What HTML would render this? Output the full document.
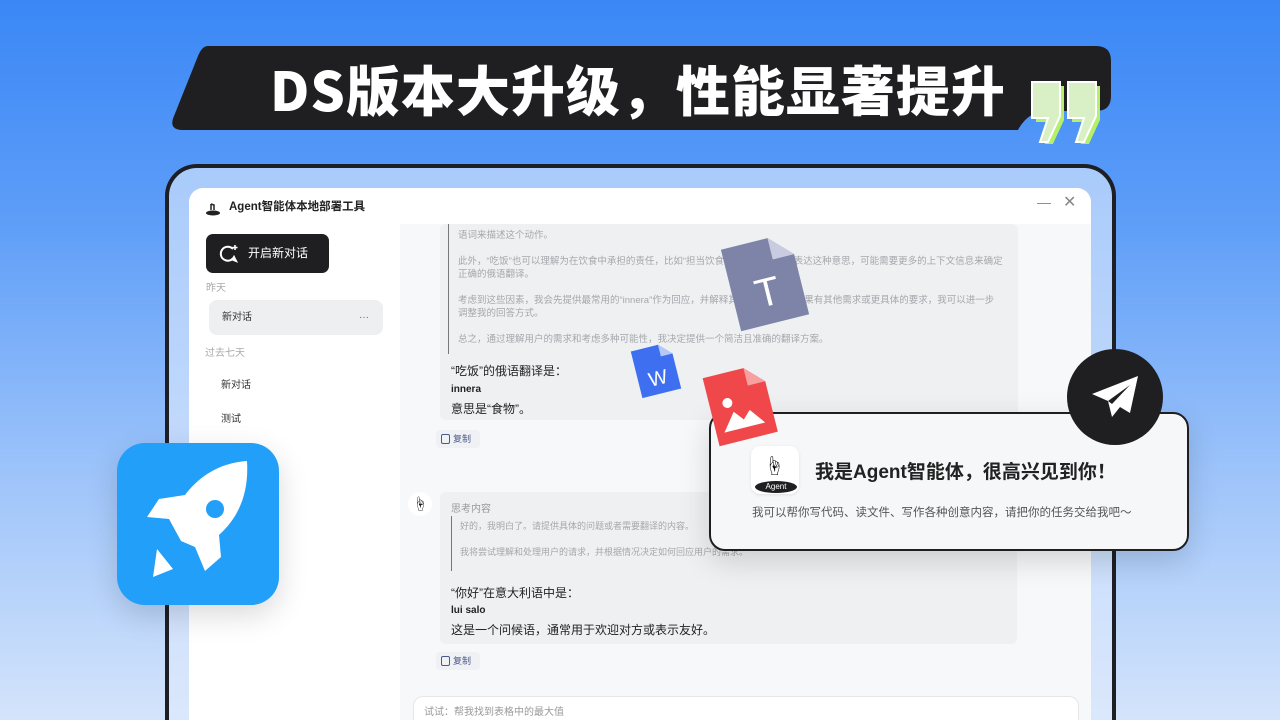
<!DOCTYPE html>
<html><head><meta charset="utf-8">
<style>
*{margin:0;padding:0;box-sizing:border-box}
html,body{width:1280px;height:720px;overflow:hidden}
body{position:relative;font-family:"Liberation Sans","Noto Sans CJK SC",sans-serif;background:linear-gradient(180deg,#3a87f6 0%,#5d9df8 30%,#9cc3fa 65%,#d4e4fb 100%)}
.abs{position:absolute}
.frame{left:165px;top:164px;width:951px;height:562px;border:4px solid #1d1f24;border-bottom:none;border-radius:32px 32px 0 0;background:linear-gradient(180deg,#a9cbfb,#dbe8fc)}
.win{left:189px;top:188px;width:902px;height:532px;background:#fff;border-radius:14px 14px 0 0;overflow:hidden}
.chat{left:211px;top:36px;width:691px;height:496px;background:#f7f8fa}
.think{background:#eff0f2;border-radius:6px}
.g{color:#a5a7ac;font-size:9.5px;line-height:13px}
.t{color:#222;font-size:12px}
</style></head><body>
<svg class="abs" style="left:168px;top:46px" width="945" height="86"><path d="M40 0 H928 Q943 0 943 15 V50 Q943 65 928 65 H880 Q860 65 850 84 H15 Q0 84 6 70 L30 10 Q34 0 40 0Z" fill="#1f1f21"/></svg>
<div class="abs" style="left:270px;top:52px;font-size:54px;font-weight:900;color:#fff;letter-spacing:1px;line-height:72px;font-family:'Noto Sans CJK SC',sans-serif;white-space:nowrap">DS版本大升级，性能显著提升</div>
<svg class="abs" style="left:1028px;top:78px" width="80" height="66">
<g fill="#b6f06a"><path d="M4 4h28v34l-12 26h-8l8-24h-16z" transform="translate(4,4)"/><path d="M40 4h28v34l-12 26h-8l8-24h-16z" transform="translate(4,4)"/></g>
<g fill="#d9f0c7" stroke="#fff" stroke-width="2"><path d="M4 4h28v34l-12 26h-8l8-24h-16z"/><path d="M40 4h28v34l-12 26h-8l8-24h-16z"/></g></svg>
<div class="abs frame"></div>
<div class="abs win">
 <div class="abs" style="left:16px;top:10px;width:16px;height:18px"><svg width="16" height="18"><ellipse cx="8" cy="15" rx="7" ry="2.5" fill="#222"/><path d="M6 12V6M6 6l3 1v5" stroke="#222" stroke-width="1.5" fill="none"/></svg></div>
 <div class="abs" style="left:40px;top:10px;font-size:11.5px;font-weight:bold;color:#222">Agent智能体本地部署工具</div>
 <div class="abs" style="left:848px;top:6px;font-size:14px;color:#888">—</div>
 <div class="abs" style="left:874px;top:4px;font-size:16px;color:#888">✕</div>
 <div class="abs" style="left:17px;top:46px;width:123px;height:39px;background:#1f1f21;border-radius:7px;color:#fff;font-size:12px;line-height:39px;padding-left:42px">开启新对话</div>
 <svg class="abs" style="left:30px;top:56px" width="20" height="20"><path d="M14 5A7 7 0 1 0 15 13L17 17 12 15" fill="none" stroke="#fff" stroke-width="2"/><path d="M16 1v5M13.5 3.5h5" stroke="#fff" stroke-width="1.6"/></svg>
 <div class="abs" style="left:17px;top:91px;font-size:10px;color:#aaa">昨天</div>
 <div class="abs" style="left:20px;top:112px;width:174px;height:35px;background:#eeeff1;border-radius:8px;font-size:10px;color:#333;line-height:35px;padding-left:13px">新对话<span style="position:absolute;right:14px;color:#666">···</span></div>
 <div class="abs" style="left:16px;top:156px;font-size:10px;color:#aaa">过去七天</div>
 <div class="abs" style="left:32px;top:188px;font-size:10px;color:#333">新对话</div>
 <div class="abs" style="left:32px;top:222px;font-size:10px;color:#333">测试</div>
 <div class="abs chat">
  <div class="abs think" style="left:40px;top:0;width:578px;height:196px"></div>
  <div class="abs" style="left:48px;top:0;width:1px;height:130px;background:#777"></div>
  <div class="abs g" style="left:58px;top:5px;width:545px">语词来描述这个动作。<br><br>此外，“吃饭”也可以理解为在饮食中承担的责任，比如“担当饮食”。如果用户想要表达这种意思，可能需要更多的上下文信息来确定正确的俄语翻译。<br><br>考虑到这些因素，我会先提供最常用的“innera”作为回应，并解释其含义和背景。如果有其他需求或更具体的要求，我可以进一步调整我的回答方式。<br><br>总之，通过理解用户的需求和考虑多种可能性，我决定提供一个简洁且准确的翻译方案。</div>
  <div class="abs t" style="left:51px;top:138px">“吃饭”的俄语翻译是：</div>
  <div class="abs" style="left:51px;top:160px;font-size:10px;font-weight:bold;color:#222">innera</div>
  <div class="abs t" style="left:51px;top:176px">意思是“食物”。</div>
  <div class="abs" style="left:36px;top:206px;width:44px;height:18px;background:#eff1f5;border-radius:4px;font-size:9px;color:#4a5a8a;line-height:18px;padding-left:17px">复制</div>
  <div class="abs" style="left:41px;top:210px;width:9px;height:10px;border:1.2px solid #4a5a8a;border-radius:2px"></div>
  <div class="abs" style="left:8px;top:268px;width:24px;height:24px;border-radius:50%;background:#fff;font-size:14px;text-align:center;line-height:24px">☝</div>
  <div class="abs think" style="left:40px;top:268px;width:577px;height:152px"></div>
  <div class="abs" style="left:51px;top:276px;font-size:10px;color:#999">思考内容</div>
  <div class="abs" style="left:51px;top:292px;width:1px;height:55px;background:#777"></div>
  <div class="abs g" style="left:60px;top:296px;font-size:9px">好的，我明白了。请提供具体的问题或者需要翻译的内容。<br><br>我将尝试理解和处理用户的请求，并根据情况决定如何回应用户的需求。</div>
  <div class="abs t" style="left:51px;top:360px">“你好”在意大利语中是：</div>
  <div class="abs" style="left:51px;top:381px;font-size:10px;font-weight:bold;color:#222">lui salo</div>
  <div class="abs t" style="left:51px;top:397px">这是一个问候语，通常用于欢迎对方或表示友好。</div>
  <div class="abs" style="left:36px;top:428px;width:44px;height:18px;background:#eff1f5;border-radius:4px;font-size:9px;color:#4a5a8a;line-height:18px;padding-left:17px">复制</div>
  <div class="abs" style="left:41px;top:432px;width:9px;height:10px;border:1.2px solid #4a5a8a;border-radius:2px"></div>
  <div class="abs" style="left:13px;top:472px;width:666px;height:24px;background:#fff;border:1px solid #e4e6ea;border-bottom:none;border-radius:10px 10px 0 0;font-size:10px;color:#999;padding:6px 10px">试试：帮我找到表格中的最大值</div>
 </div>
</div>
<svg class="abs" style="left:715px;top:232px" width="100" height="100"><g transform="rotate(-14 50 50)"><path d="M15 8h48l22 22v62H15z" fill="#7d84a8"/><path d="M63 8v22h22z" fill="#c9cbe0"/><text x="50" y="74" font-size="40" fill="#fff" text-anchor="middle" font-family="Liberation Sans">T</text></g></svg>
<svg class="abs" style="left:626px;top:340px" width="60" height="60"><g transform="rotate(-14 30 30)"><path d="M10 6h28l12 12v36H10z" fill="#3d6ff0"/><path d="M38 6v12h12z" fill="#b5c8f8"/><text x="30" y="45" font-size="20" fill="#fff" text-anchor="middle" font-family="Liberation Sans">W</text></g></svg>
<div class="abs" style="left:709px;top:412px;width:480px;height:139px;background:#f6f7f9;border:2.5px solid #1f1f21;border-radius:16px;box-shadow:0 10px 30px rgba(0,0,0,.15)"></div>
<svg class="abs" style="left:700px;top:362px" width="80" height="85"><g transform="rotate(-14 40 42)"><path d="M10 8h42l18 18v52H10z" fill="#f0474a"/><path d="M52 8v18h18z" fill="#f7a0a0"/><circle cx="28" cy="38" r="5" fill="#fff"/><path d="M18 66l14-18 8 10 8-8 12 16z" fill="#fff"/></g></svg>
<div class="abs" style="left:751px;top:446px;width:48px;height:48px;background:#fff;border-radius:9px;box-shadow:0 1px 3px rgba(0,0,0,.1)"></div>
<div class="abs" style="left:764px;top:450px;font-size:20px">☝</div>
<div class="abs" style="left:755px;top:481px;width:42px;height:12px;background:#1f1f21;border-radius:50%;color:#fff;font-size:8px;text-align:center;line-height:12px">Agent</div>
<div class="abs" style="left:815px;top:457px;font-size:19px;font-weight:bold;color:#222">我是Agent智能体，很高兴见到你！</div>
<div class="abs" style="left:752px;top:504px;font-size:11.5px;color:#555">我可以帮你写代码、读文件、写作各种创意内容，请把你的任务交给我吧～</div>
<div class="abs" style="left:1067px;top:349px;width:96px;height:96px;border-radius:50%;background:#1f1f21"></div>
<svg class="abs" style="left:1088px;top:370px" width="56" height="56"><path d="M50 6L4 24l16 7 4 16 8-10 10 6z" fill="#fff"/><path d="M20 31l22-16-18 19z" fill="#1f1f21"/></svg>
<div class="abs" style="left:117px;top:443px;width:162px;height:162px;background:#229ff9;border-radius:28px;box-shadow:0 10px 30px rgba(0,0,0,.15)"></div>
<svg class="abs" style="left:117px;top:443px" width="162" height="162"><path d="M130 18C100 20 80 36 68 52L42 56 30 74 52 76 64 98 78 104 88 128 104 114 102 92C122 74 132 50 130 18Z" fill="#fff"/><circle cx="98" cy="66" r="9" fill="#229ff9"/><path d="M40 106L56 126 36 134z" fill="#fff"/></svg>
</body></html>
